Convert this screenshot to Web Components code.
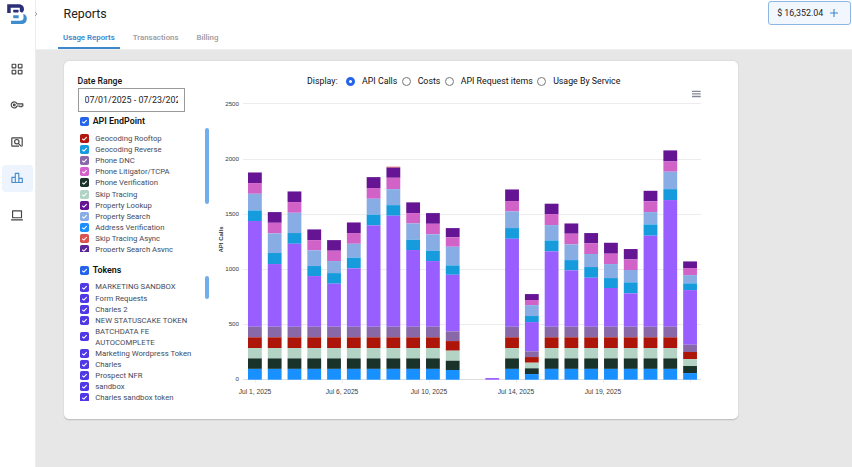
<!DOCTYPE html>
<html lang="en">
<head>
<meta charset="utf-8">
<title>Reports</title>
<style>
    body {
        margin: 0;
        font-family: Roboto, Arial, sans-serif;
        background: #e7e7e7;
        color: #222;
        overflow: hidden;
    }
</style>
</head>
<body>
<reports-app></reports-app>

<script>
class SideNav extends HTMLElement {
    constructor() {
        super();
        this.attachShadow({ mode: 'open' });
    }

    connectedCallback() {
        this.shadowRoot.innerHTML = `
            <style>
                :host {
                    display: flex;
                    flex-direction: column;
                    align-items: center;
                    box-sizing: border-box;
                    width: 35.5px;
                    height: 467px;
                    padding-top: 3px;
                    background: #fff;
                    border-right: 1px solid #ececec;
                }
                .logo { width: 22px; height: 22px; margin-bottom: 30px; }
                .item {
                    display: flex;
                    align-items: center;
                    justify-content: center;
                    width: 31px;
                    height: 27px;
                    margin-bottom: 9.6px;
                    border-radius: 4px;
                    color: #444;
                }
                .item.active { background: #edf4fe; color: #4a8ccc; }
                .item svg { width: 14px; height: 14px; }
                g { fill: none; stroke: currentColor; stroke-width: 1.15; stroke-linejoin: round; }
            </style>
            <svg class="logo" viewBox="0 0 22 22">
                <path d="M1.2 10V1.2H12.6C16.6 1.2 18 3.6 18 6C18 7.7 17.2 9 16.2 9.8L13.8 8.5V4.7H4.7V10Z" fill="#2b2f77"/>
                <rect x="7.2" y="6.8" width="5.4" height="2.8" rx=".8" fill="#2b2f77"/>
                <path d="M7.2 12.3H12.7V15.3H8.2C7.4 15.3 7.2 14.8 7.2 14.2Z" fill="#3f8dcd"/>
                <path d="M17.3 10.9C19.5 11.5 20.8 13 20.8 15.4C20.8 18.9 18.7 21.1 15.2 21.1H5V17.8H13.7C16.5 17.8 17.5 16.7 17.5 14.6Z" fill="#3f8dcd"/>
            </svg>
            <div class="item"><svg viewBox="0 0 14 14"><g>
                <rect x="2.1" y="2.2" width="3.7" height="3.7" rx=".6"/><rect x="8.3" y="2.2" width="3.7" height="3.7" rx=".6"/>
                <rect x="2.1" y="8.2" width="3.7" height="3.7" rx=".6"/><rect x="8.3" y="8.2" width="3.7" height="3.7" rx=".6"/>
            </g></svg></div>
            <div class="item"><svg viewBox="0 0 14 14"><g>
                <path d="M7 5.9H12.8V8H11.8V8.7H9.9V8H7A3 3 0 1 1 7 5.9Z"/><circle cx="4.3" cy="7" r=".9"/>
            </g></svg></div>
            <div class="item"><svg viewBox="0 0 14 14"><g>
                <path d="M9 11.1H2.4Q1.8 11.1 1.8 10.5V3.4Q1.8 2.8 2.4 2.8H11.6Q12.2 2.8 12.2 3.4V10.5Q12.2 11.1 11.4 11.1"/>
                <circle cx="6.8" cy="6.7" r="2.2"/><path d="M8.3 8.3L11.3 11.3"/>
            </g></svg></div>
            <div class="item active"><svg viewBox="0 0 14 14"><g>
                <path d="M1.9 6.3H5.3V11.5H1.9ZM5.3 2.3H8.8V11.5H5.3ZM8.8 7.4H12.3V11.5H8.8Z"/>
            </g></svg></div>
            <div class="item"><svg viewBox="0 0 14 14"><g>
                <path d="M2.6 2.8H11.5V9.7H2.6ZM1.1 11.8H12.9"/>
            </g></svg></div>
        `;
    }
}

class PageHeader extends HTMLElement {
    constructor() {
        super();
        this.attachShadow({ mode: 'open' });
    }

    connectedCallback() {
        this.shadowRoot.innerHTML = `
            <style>
                :host {
                    display: flex;
                    justify-content: space-between;
                    box-sizing: border-box;
                    height: 50px;
                    padding-right: 1.5px;
                    background: #fff;
                    border-bottom: 1px solid #efefef;
                }
                .left { display: flex; align-items: flex-start; }
                .arrow { width: 4px; height: 6px; margin: 11px 0 0 -2px; }
                h1 { margin: 6px 0 11px 26px; font-size: 12.4px; line-height: 15px; font-weight: 400; }
                nav { display: flex; margin-left: 20px; }
                nav span {
                    height: 16px;
                    line-height: 11px;
                    padding: 0 5.5px;
                    margin-right: 7px;
                    font-size: 7.85px;
                    font-weight: 600;
                    color: #a0a0a5;
                }
                nav span.active { color: #3d87ca; border-bottom: 2px solid #3d87ca; height: 15px; }
                .balance {
                    display: flex;
                    align-items: center;
                    justify-content: center;
                    gap: 7px;
                    box-sizing: border-box;
                    width: 82.5px;
                    height: 24px;
                    margin-top: 1px;
                    padding-right: 3px;
                    border: 1px solid #8db6e3;
                    border-radius: 3px;
                    background: #f2f7fe;
                    font-size: 8.9px;
                }
            </style>
            <div class="left">
                <svg class="arrow" viewBox="0 0 4 6"><path d="M1 1L3 3L1 5" fill="none" stroke="#888" stroke-width=".8"/></svg>
                <div>
                    <h1>Reports</h1>
                    <nav><span class="active">Usage Reports</span><span>Transactions</span><span>Billing</span></nav>
                </div>
            </div>
            <div class="balance">
                <span>$ 16,352.04</span>
                <svg width="8" height="8" viewBox="0 0 8 8"><path d="M4 0V8M0 4H8" stroke="#3d87ca" stroke-width="1.1"/></svg>
            </div>
        `;
    }
}

class CheckRow extends HTMLElement {
    constructor() {
        super();
        this.attachShadow({ mode: 'open' });
    }

    connectedCallback() {
        const color = this.getAttribute('color') || '#2563eb';
        this.shadowRoot.innerHTML = `
            <style>
                :host { display: flex; align-items: center; font-size: 7.72px; line-height: 11.1px; color: #3f4a5c; }
                :host([heading]) { font-size: 8.9px; font-weight: 600; color: #111; }
                svg { flex: none; width: 9px; height: 9px; margin-right: 6.8px; }
                :host([heading]) svg { margin-right: 4.2px; }
            </style>
            <svg viewBox="0 0 9 9">
                <rect width="9" height="9" rx="1.8" fill="${color}"/>
                <path d="M2.3 4.8L3.9 6.1L6.7 3.1" fill="none" stroke="#fff" stroke-width="1.1"/>
            </svg>
            <span><slot></slot></span>
        `;
    }
}

class CheckList extends HTMLElement {
    constructor() {
        super();
        this.attachShadow({ mode: 'open' });
    }

    connectedCallback() {
        this.shadowRoot.innerHTML = `
            <style>
                :host { display: flex; justify-content: space-between; overflow: hidden; }
                .rows { width: 118px; padding-top: var(--rows-top, 5.2px); }
                .thumb { flex: none; width: 4px; height: var(--thumb-height, 76px); border-radius: 2px; background: #72aeec; }
            </style>
            <div class="rows"><slot></slot></div>
            <div class="thumb"></div>
        `;
    }
}

class FilterPanel extends HTMLElement {
    constructor() {
        super();
        this.attachShadow({ mode: 'open' });
        this.endpoints = [
            ['Geocoding Rooftop', '#b01810'],
            ['Geocoding Reverse', '#169bdd'],
            ['Phone DNC', '#8b68aa'],
            ['Phone Litigator/TCPA', '#d660cb'],
            ['Phone Verification', '#19332b'],
            ['Skip Tracing', '#b0d3c5'],
            ['Property Lookup', '#651494'],
            ['Property Search', '#88ace4'],
            ['Address Verification', '#1890ff'],
            ['Skip Tracing Async', '#d9534f'],
            ['Property Search Async', '#5b239c']
        ];
        this.tokens = [
            'MARKETING SANDBOX', 'Form Requests', 'Charles 2', 'NEW STATUSCAKE TOKEN',
            'BATCHDATA FE<br>AUTOCOMPLETE', 'Marketing Wordpress Token', 'Charles',
            'Prospect NFR', 'sandbox', 'Charles sandbox token'
        ];
    }

    connectedCallback() {
        this.shadowRoot.innerHTML = `
            <style>
                :host { display: block; width: 131px; }
                label { display: block; margin-top: 15px; font-size: 8.7px; line-height: 11px; font-weight: 500; color: #111; }
                .date {
                    box-sizing: border-box;
                    width: 107px;
                    height: 24px;
                    margin: 1px 0 4.7px;
                    padding: 0 6px;
                    border: 1px solid #999;
                }
                .date div { overflow: hidden; white-space: nowrap; font-size: 8.85px; line-height: 22px; color: #222; }
                check-row[heading], check-list { margin-left: 2px; }
                check-list.api { height: 124px; margin-top: .6px; margin-bottom: 13px; }
                check-list.tokens { height: 125px; margin-top: .5px; --rows-top: 5px; --thumb-height: 23px; }
            </style>
            <label>Date Range</label>
            <div class="date"><div>07/01/2025 - 07/23/2025</div></div>
            <check-row heading>API EndPoint</check-row>
            <check-list class="api">
                ${this.endpoints.map(([name, color]) => `<check-row color="${color}">${name}</check-row>`).join('')}
            </check-list>
            <check-row heading>Tokens</check-row>
            <check-list class="tokens">
                ${this.tokens.map(name => `<check-row color="#4f39e6">${name}</check-row>`).join('')}
            </check-list>
        `;
    }
}

class DisplayOptions extends HTMLElement {
    constructor() {
        super();
        this.attachShadow({ mode: 'open' });
    }

    connectedCallback() {
        this.shadowRoot.innerHTML = `
            <style>
                :host { display: flex; align-items: center; height: 12px; font-size: 8.8px; line-height: 12px; color: #111; }
                .title { margin-right: 8.5px; }
                i { box-sizing: border-box; width: 9px; height: 9px; margin: 1px 7px 0 0; border: 1px solid #777; border-radius: 50%; }
                i.on { border: 3px solid #2563eb; }
                .option { margin-right: 4.4px; }
            </style>
            <span class="title">Display:</span>
            <i class="on"></i><span class="option">API Calls</span>
            <i></i><span class="option">Costs</span>
            <i></i><span class="option">API Request items</span>
            <i></i><span class="option">Usage By Service</span>
        `;
    }
}

class UsageChart extends HTMLElement {
    constructor() {
        super();
        this.attachShadow({ mode: 'open' });
        this.base = [480, 384, 287, 193, 98];
        this.colors = ['#651494', '#d162c7', '#88ace4', '#169bdd', '#985eff', '#8968a8', '#ad1508', '#b3d3c5', '#19332b', '#1890ff'];
        // running totals per day, top segment first; days without their own base share this.base
        this.days = [
            [1878, 1782, 1685, 1534, 1438],
            [1519, 1422, 1326, 1148, 1048],
            [1706, 1610, 1513, 1329, 1232],
            [1362, 1265, 1172, 1030, 939],
            [1265, 1169, 1075, 966, 870],
            [1425, 1329, 1232, 1105, 1009],
            [1836, 1737, 1640, 1495, 1398],
            [1924, 1830, 1727, 1582, 1486],
            [1607, 1510, 1416, 1268, 1175],
            [1510, 1413, 1317, 1169, 1075],
            [1374, 1290, 1205, 1036, 951, 438, 350, 263, 172, 88],
            null,
            [15, 15, 15, 15, 15, 0, 0, 0, 0, 0],
            [1724, 1619, 1525, 1374, 1277],
            [776, 722, 676, 577, 522, 257, 205, 154, 103, 51],
            [1595, 1501, 1401, 1262, 1163],
            [1416, 1323, 1226, 1084, 991],
            [1329, 1235, 1139, 1021, 924],
            [1241, 1142, 1048, 921, 831],
            [1184, 1090, 994, 882, 782],
            [1712, 1616, 1519, 1407, 1305],
            [2078, 1978, 1885, 1727, 1628],
            [1072, 1012, 948, 873, 812, 317, 251, 187, 124, 60]
        ];
        this.labels = [[255, 'Jul 1, 2025'], [342, 'Jul 6, 2025'], [429, 'Jul 10, 2025'], [516, 'Jul 14, 2025'], [603, 'Jul 19, 2025']];
    }

    y(value) {
        return 379.7 - value * 0.11034;
    }

    drawGrid() {
        return [0, 500, 1000, 1500, 2000, 2500].map(v => `
            <path d="M243 ${Math.floor(this.y(v)) + .5}H701" stroke="${v ? '#ececee' : '#dedee2'}"/>
            <text x="239" y="${this.y(v) + 1.7}" text-anchor="end">${v}</text>
        `).join('');
    }

    drawBar(day, i) {
        if (!day) return '';
        const levels = (day.length === 5 ? day.concat(this.base) : day).concat(0);
        const x = 248 + i * 19.78;
        return this.colors.map((color, n) => {
            const height = (levels[n] - levels[n + 1]) * 0.11034;
            return height > 0 ? `<rect x="${x.toFixed(2)}" y="${this.y(levels[n]).toFixed(2)}" width="13.8" height="${height.toFixed(2)}" fill="${color}"/>` : '';
        }).join('');
    }

    connectedCallback() {
        this.shadowRoot.innerHTML = `
            <style>
                :host { display: block; }
                svg { display: block; }
                text { font: 6.2px "Liberation Sans", Arial, sans-serif; fill: #373d3f; }
                .dates text { font-size: 6.7px; text-anchor: middle; }
                .axis { font-weight: 700; font-size: 6px; }
            </style>
            <svg width="497" height="312" viewBox="213 88 497 312">
                <path d="M692 91.3H700.7M692 93.9H700.7M692 96.5H700.7" stroke="#858997" stroke-width="1.3"/>
                ${this.drawGrid()}
                <text class="axis" transform="translate(223.3 239.5) rotate(-90)" text-anchor="middle">API Calls</text>
                ${this.days.map((day, i) => this.drawBar(day, i)).join('')}
                <rect x="386.4" y="166.7" width="13.8" height=".7" fill="#d9534f"/>
                <path d="M255.5 380V383M342.5 380V383M429.5 380V383M516.5 380V383M603.5 380V383M690.5 380V383" stroke="#ececee"/>
                <g class="dates">${this.labels.map(([x, text]) => `<text x="${x}" y="393.5">${text}</text>`).join('')}</g>
            </svg>
        `;
    }
}

class ReportCard extends HTMLElement {
    constructor() {
        super();
        this.attachShadow({ mode: 'open' });
    }

    connectedCallback() {
        this.shadowRoot.innerHTML = `
            <style>
                :host {
                    display: flex;
                    box-sizing: border-box;
                    width: 674.5px;
                    height: 358.5px;
                    margin: 10.5px 0 0 28px;
                    padding-left: 14px;
                    border-radius: 5px;
                    background: #fff;
                    box-shadow: 0 .5px 1.5px rgba(0, 0, 0, .2);
                }
                .main { margin-left: 4.5px; }
                display-options { margin: 14px 0 1.5px 94px; }
            </style>
            <filter-panel></filter-panel>
            <div class="main">
                <display-options></display-options>
                <usage-chart></usage-chart>
            </div>
        `;
    }
}

class ReportsApp extends HTMLElement {
    constructor() {
        super();
        this.attachShadow({ mode: 'open' });
    }

    connectedCallback() {
        this.shadowRoot.innerHTML = `
            <style>
                :host { display: grid; grid-template-columns: 35.5px 1fr; height: 467px; }
            </style>
            <side-nav></side-nav>
            <main>
                <page-header></page-header>
                <report-card></report-card>
            </main>
        `;
    }
}

customElements.define('side-nav', SideNav);
customElements.define('page-header', PageHeader);
customElements.define('check-row', CheckRow);
customElements.define('check-list', CheckList);
customElements.define('filter-panel', FilterPanel);
customElements.define('display-options', DisplayOptions);
customElements.define('usage-chart', UsageChart);
customElements.define('report-card', ReportCard);
customElements.define('reports-app', ReportsApp);
</script>
</body>
</html>
